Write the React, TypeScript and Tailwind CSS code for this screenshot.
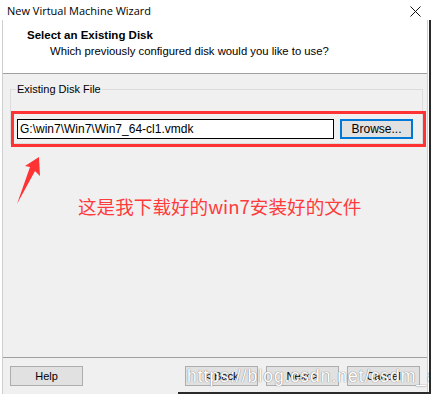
import React from "react";

const ui = { fontFamily: '"Liberation Sans", Arial, sans-serif' };
const title = { fontFamily: '"Open Sans", "Noto Sans", sans-serif' };

function Btn({ children, className = "" }: { children: React.ReactNode; className?: string }) {
  return (
    <div
      className={`w-[73px] h-[20px] bg-[#e1e1e1] border border-[#adadad] flex items-center justify-center text-[11px] text-black ${className}`}
      style={ui}
    >
      {children}
    </div>
  );
}

export default function App() {
  return (
    <div className="relative w-[431px] h-[394px] bg-white overflow-hidden flex flex-col">
      {/* title bar */}
      <div className="h-[20px] flex items-center justify-between pl-[7px] pr-[10px] bg-white">
        <span className="text-[11px] text-black leading-none" style={title}>
          New Virtual Machine Wizard
        </span>
        <svg width="11" height="11" viewBox="0 0 11 11" className="mt-[2px]">
          <path d="M0.5 0.5 L10.5 10.5 M10.5 0.5 L0.5 10.5" stroke="#111" strokeWidth="1" />
        </svg>
      </div>
      {/* framed area */}
      <div className="flex-1 flex flex-col ml-[2px] mr-[3px] border-l border-r border-[#cfcfcf]">
        {/* header */}
        <div className="h-[54px] bg-white border-b border-[#a0a0a0] flex flex-col pt-[9px]">
          <div className="pl-[24px] text-[11.5px] font-bold text-black leading-[13px]" style={ui}>
            Select an Existing Disk
          </div>
          <div className="pl-[47px] mt-[3px] text-[11.3px] text-black leading-[13px]" style={ui}>
            Which previously configured disk would you like to use?
          </div>
        </div>
        {/* body */}
        <div className="flex-1 bg-[#f0f0f0] flex flex-col">
          <div className="relative ml-[7px] mr-[4px] mt-[15px] h-[55px] border border-[#dcdcdc]">
            <span
              className="absolute left-[5px] -top-[8px] bg-[#f0f0f0] px-[1px] text-[11px] text-black leading-[14px]"
              style={ui}
            >
              Existing Disk File
            </span>
          </div>
          <div className="flex-1" />
          <div className="h-[37px] border-t border-[#a0a0a0] flex items-start pt-[8px] px-[7px]">
            <Btn>Help</Btn>
            <div className="flex-1" />
            <Btn className="text-[#333]">&lt; Back</Btn>
            <Btn className="ml-[8px] text-[#333]">Next &gt;</Btn>
            <Btn className="ml-[8px] text-[#333]">Cancel</Btn>
          </div>
        </div>
      </div>

      {/* red highlight box with input and browse */}
      <div className="absolute left-[11px] top-[111px] w-[415px] h-[36px] border-[3px] border-[#ff3333] flex items-center pl-[3px]">
        <div
          className="w-[317px] h-[20px] bg-white border border-black flex items-center pl-[2px] text-[12px] text-black"
          style={ui}
        >
          G:\win7\Win7\Win7_64-cl1.vmdk
        </div>
        <div
          className="ml-[6px] w-[73px] h-[20px] bg-[#e1e1e1] border-2 border-[#0078d7] flex items-center justify-center text-[12px] text-black"
          style={ui}
        >
          Browse...
        </div>
      </div>

      {/* red arrow */}
      <svg className="absolute left-[14px] top-[155px]" width="30" height="52" viewBox="0 0 30 52">
        <polygon points="25,2 26,21 21,16 3,49 16,12 11,11" fill="#ff3333" />
      </svg>

      {/* annotation */}
      <div
        className="absolute left-[78px] top-[195px] text-[18.6px] leading-[22px] text-[#ff3b3b] whitespace-nowrap"
        style={{ fontFamily: '"Noto Sans CJK SC", "Liberation Sans", sans-serif' }}
      >
        这是我下载好的win7安装好的文件
      </div>

      {/* watermark */}
      <div
        className="absolute left-[187px] top-[365px] text-[17.5px] tracking-[1px] leading-[22px] text-white whitespace-nowrap"
        style={{ fontFamily: '"Liberation Sans", Arial, sans-serif', textShadow: "0 0 1px #777, 0 0 1px #999" }}
      >
        https://blog.csdn.net/csdm_admin
      </div>

      {/* bottom-right shadow */}
      <div className="absolute left-[178px] bottom-0 right-0 h-[2px] bg-[#2a2a2a]" />
      <div className="absolute right-0 top-[20px] bottom-0 w-[2px] bg-[#2a2a2a]" />
    </div>
  );
}
